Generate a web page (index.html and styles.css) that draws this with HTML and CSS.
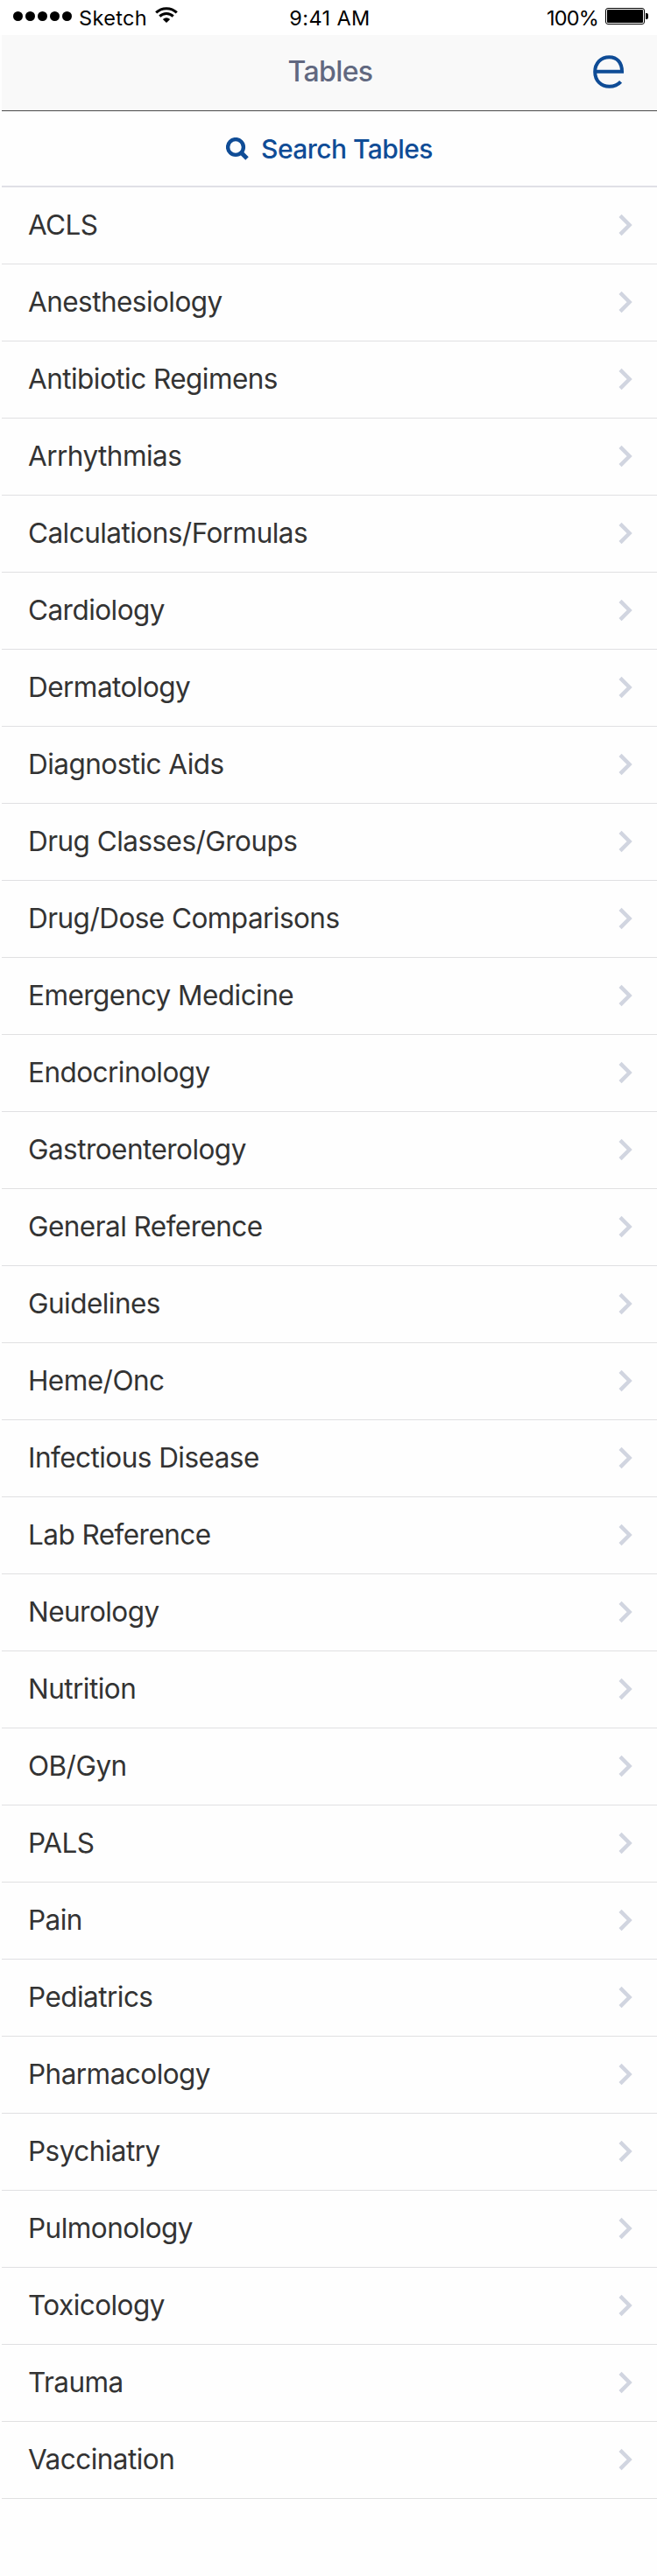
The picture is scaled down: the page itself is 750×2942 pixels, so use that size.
FILE: index.html
```html
<!DOCTYPE html>
<html lang="en">
<head>
<meta charset="utf-8">
<title>Tables</title>
<link rel="stylesheet" href="styles.css">
</head>
<body>
<svg class="defs" aria-hidden="true">
  <symbol id="chevron" viewBox="0 0 16 26"><path d="M2 2.4 L12.6 13 L2 23.6" fill="none" stroke="currentColor" stroke-width="4.4"/></symbol>
</svg>
<div class="status">
  <div class="status-left">
    <div class="signal"><i></i><i></i><i></i><i></i><i></i></div>
    <span class="carrier">Sketch</span>
    <svg class="wifi" width="26" height="19" viewBox="0 0 26 19">
      <path d="M1.2 6.4 A17 17 0 0 1 24.8 6.4" fill="none" stroke="#000" stroke-width="3"/>
      <path d="M5.3 10.6 A11 11 0 0 1 20.7 10.6" fill="none" stroke="#000" stroke-width="3"/>
      <path d="M8.8 14 Q13 10.4 17.2 14 L13 18 Z"/>
    </svg>
  </div>
  <span class="time">9:41 AM</span>
  <div class="status-right">
    <span class="percent">100%</span>
    <svg class="battery" width="50" height="20" viewBox="0 0 50 20">
      <rect x=".5" y=".5" width="44" height="18" rx="2.5" fill="none" stroke="#000"/>
      <rect x="2" y="2" width="41" height="15" rx="1"/>
      <path d="M46 6 h1 a2 2 0 0 1 2 2 v3 a2 2 0 0 1 -2 2 h-1 z"/>
    </svg>
  </div>
</div>
<header class="nav">
  <h1 class="title"><span>Tables</span></h1>
  <svg class="logo" width="36" height="40" viewBox="0 0 36 40">
    <path d="M2.5 18.8 H33 C33 8.5 27.5 2.2 18.5 2.2 C9 2.2 2.2 9.3 2.2 19 C2.2 29 9 35.8 18.6 35.8 C24 35.8 28.4 34 31.6 30.4" fill="none" stroke="#0f4c96" stroke-width="4"/>
  </svg>
</header>
<a class="search">
  <svg class="glass" width="26" height="26" viewBox="0 0 26 26"><circle cx="11" cy="11" r="8.9" fill="none" stroke="#0f4c96" stroke-width="4.4"/><path d="M17 17 L24 24" stroke="#0f4c96" stroke-width="5"/></svg>
  <span class="search-label">Search Tables</span>
</a>
<ul class="list">
  <li><span>ACLS</span><svg><use href="#chevron"/></svg></li>
  <li><span>Anesthesiology</span><svg><use href="#chevron"/></svg></li>
  <li><span>Antibiotic Regimens</span><svg><use href="#chevron"/></svg></li>
  <li><span>Arrhythmias</span><svg><use href="#chevron"/></svg></li>
  <li><span>Calculations/Formulas</span><svg><use href="#chevron"/></svg></li>
  <li><span>Cardiology</span><svg><use href="#chevron"/></svg></li>
  <li><span>Dermatology</span><svg><use href="#chevron"/></svg></li>
  <li><span>Diagnostic Aids</span><svg><use href="#chevron"/></svg></li>
  <li><span>Drug Classes/Groups</span><svg><use href="#chevron"/></svg></li>
  <li><span>Drug/Dose Comparisons</span><svg><use href="#chevron"/></svg></li>
  <li><span>Emergency Medicine</span><svg><use href="#chevron"/></svg></li>
  <li><span>Endocrinology</span><svg><use href="#chevron"/></svg></li>
  <li><span>Gastroenterology</span><svg><use href="#chevron"/></svg></li>
  <li><span>General Reference</span><svg><use href="#chevron"/></svg></li>
  <li><span>Guidelines</span><svg><use href="#chevron"/></svg></li>
  <li><span>Heme/Onc</span><svg><use href="#chevron"/></svg></li>
  <li><span>Infectious Disease</span><svg><use href="#chevron"/></svg></li>
  <li><span>Lab Reference</span><svg><use href="#chevron"/></svg></li>
  <li><span>Neurology</span><svg><use href="#chevron"/></svg></li>
  <li><span>Nutrition</span><svg><use href="#chevron"/></svg></li>
  <li><span>OB/Gyn</span><svg><use href="#chevron"/></svg></li>
  <li><span>PALS</span><svg><use href="#chevron"/></svg></li>
  <li><span>Pain</span><svg><use href="#chevron"/></svg></li>
  <li><span>Pediatrics</span><svg><use href="#chevron"/></svg></li>
  <li><span>Pharmacology</span><svg><use href="#chevron"/></svg></li>
  <li><span>Psychiatry</span><svg><use href="#chevron"/></svg></li>
  <li><span>Pulmonology</span><svg><use href="#chevron"/></svg></li>
  <li><span>Toxicology</span><svg><use href="#chevron"/></svg></li>
  <li><span>Trauma</span><svg><use href="#chevron"/></svg></li>
  <li><span>Vaccination</span><svg><use href="#chevron"/></svg></li>
</ul>
</body>
</html>
```
FILE: styles.css
```css
* { box-sizing: border-box; }
body {
  margin: 0;
  min-height: 2942px;
  background: #fefefe;
  font-family: Inter, "Liberation Sans", sans-serif;
}
svg { display: block; flex: none; }
.defs { width: 0; height: 0; position: absolute; }

.status {
  display: grid;
  grid-template-columns: 1fr auto 1fr;
  height: 40px;
  padding: 0 9px 0 15px;
  background: #fff;
  color: #000;
  font-size: 23.5px;
  line-height: 41px;
}
.status-left, .status-right { display: flex; align-items: flex-start; }
.status-right { justify-content: flex-end; }
.signal { display: flex; gap: 3px; padding-top: 13px; }
.signal i { width: 11px; height: 11px; border-radius: 50%; background: #000; }
.carrier { margin-left: 8px; letter-spacing: .35px; }
.time { margin-right: 3px; letter-spacing: .4px; }
.percent { letter-spacing: -.8px; }
.wifi { margin: 8px 0 0 9px; }
.battery { margin: 9px 0 0 8px; }

.nav {
  display: grid;
  grid-template-columns: 1fr auto 1fr;
  align-items: start;
  height: 87px;
  margin-left: 2px;
  padding-right: 37px;
  background: #f9f9f9;
  border-bottom: 1px solid #4a4a4a;
}
.title {
  grid-column: 2;
  margin: 0 0 0 39px;
  font-size: 32px;
  font-weight: 500;
  letter-spacing: -.6px;
  line-height: 84px;
  color: #616880;
}
.logo { justify-self: end; margin-top: 23px; }

.search {
  display: flex;
  align-items: center;
  justify-content: center;
  gap: 14px;
  height: 87px;
  margin-left: 2px;
  border-bottom: 2px solid #e0e0e6;
  color: #0f4c96;
  font-size: 30px;
  font-weight: 500;
  letter-spacing: -.55px;
}

.list { margin: 0 0 0 2px; padding: 0; list-style: none; }
.list li {
  display: flex;
  align-items: center;
  justify-content: space-between;
  height: 88px;
  padding: 0 28px 2px 30px;
  border-bottom: 1px solid #e0e0e2;
  color: #333;
  font-size: 31.5px;
  letter-spacing: -.54px;
}
.list svg { width: 16px; height: 26px; color: #d1d5e0; }
```
